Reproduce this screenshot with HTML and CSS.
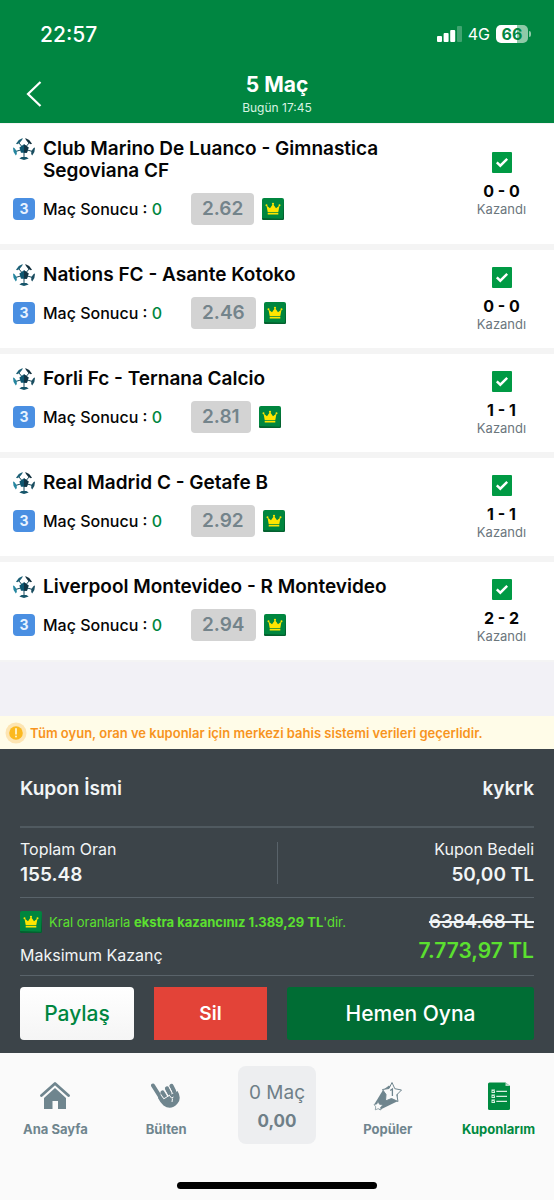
FILE: index.html
```html
<!DOCTYPE html>
<html lang="tr">
<head>
<meta charset="utf-8">
<meta name="viewport" content="width=device-width, initial-scale=1">
<title>Kuponlarım</title>
<link rel="stylesheet" href="styles.css">
</head>
<body>
<svg class="defs" aria-hidden="true">
  <symbol id="ball" viewBox="0 0 22 22">
    <path d="M11 11 5.500 4.500M11 11 16.500 4.500M11 11 2.500 13.500M11 11 19.500 13.500M11 11V20" stroke="#16495a" stroke-width="1" fill="none"/>
    <path d="M11 6.200 15.600 9.400 14 14.700H8L6.400 9.400z" fill="#0d5670"/>
    <path d="M11 6.200 15.600 9.400 14 14.700H11z" fill="#123444"/>
    <path d="M9.800 0 9.200 1.800 6.800 4.800 4.200 6.200 3 5.800 5.800 2z" fill="#1b5f76"/>
    <path d="M12.200 0 12.800 1.800 15.200 4.800 17.800 6.200 19 5.800 16.200 2z" fill="#122f3d"/>
    <path d="M0 9.500 1.400 10 3.600 13 3.800 16 2.800 17.500 .6 14z" fill="#2486a0"/>
    <path d="M22 9.500 20.600 10 18.400 13 18.200 16 19.200 17.500 21.400 14z" fill="#1a4d60"/>
    <path d="M6.300 20.500 8.600 19H13.400L15.700 20.500 11 22z" fill="#16556a"/>
  </symbol>
  <symbol id="crown" viewBox="0 0 22 22">
    <rect width="22" height="22" rx="2" fill="#00863f"/>
    <path d="M0 20V20.500A1.500 1.500 0 0 0 1.500 22H20.500A1.500 1.500 0 0 0 22 20.500V1.500L20.800 20.800z" fill="#04602f"/>
    <path d="M4.500 7.500 8 10.200 11 6 14 10.200 17.500 7.500 16.300 14H5.700zM5.700 14.700H16.300V16.400H5.700z" fill="#ffe500"/>
    <g fill="#ffe500"><circle cx="4.500" cy="7.300" r="1"/><circle cx="11" cy="5.800" r="1.100"/><circle cx="17.500" cy="7.300" r="1"/></g>
  </symbol>
  <symbol id="check" viewBox="0 0 20 21">
    <rect width="20" height="21" rx="1" fill="#009a44"/>
    <path d="M4.800 10.300 8.300 13.700 15.200 6.800" fill="none" stroke="#fff" stroke-width="2.400"/>
  </symbol>
</svg>

<header class="header">
  <div class="status">
    <span class="clock">22:57</span>
    <div class="status-right">
      <svg class="signal" viewBox="0 0 25 16" aria-hidden="true"><g fill="#fff"><rect y="10" width="5" height="6" rx="1"/><rect x="6.600" y="7" width="5" height="9" rx="1"/><rect x="13.200" y="4" width="5" height="12" rx="1"/><rect x="20" y="0" width="5" height="16" rx="1" opacity=".25"/></g></svg>
      <span class="network">4G</span>
      <span class="battery">66</span>
    </div>
  </div>
  <div class="titlebar">
    <button class="back" type="button" aria-label="Geri"><svg viewBox="0 0 16 26" aria-hidden="true"><path d="M14.500 1 2 13 14.500 25" fill="none" stroke="#fff" stroke-width="2.200"/></svg></button>
    <div class="heading">
      <h1>5 Maç</h1>
      <p>Bugün 17:45</p>
    </div>
  </div>
</header>

<main class="content">
  <section class="matches">
    <article class="match">
      <div class="match-main">
        <div class="teams"><svg class="icon"><use href="#ball"/></svg><h2>Club Marino De Luanco - Gimnastica Segoviana CF</h2></div>
        <div class="bet"><span class="count">3</span><span class="market">Maç Sonucu : <b>0</b></span><span class="odds">2.62</span><svg class="icon"><use href="#crown"/></svg></div>
      </div>
      <div class="result"><svg class="tick"><use href="#check"/></svg><strong>0 - 0</strong><span>Kazandı</span></div>
    </article>
    <article class="match">
      <div class="match-main">
        <div class="teams"><svg class="icon"><use href="#ball"/></svg><h2>Nations FC - Asante Kotoko</h2></div>
        <div class="bet"><span class="count">3</span><span class="market">Maç Sonucu : <b>0</b></span><span class="odds">2.46</span><svg class="icon"><use href="#crown"/></svg></div>
      </div>
      <div class="result"><svg class="tick"><use href="#check"/></svg><strong>0 - 0</strong><span>Kazandı</span></div>
    </article>
    <article class="match">
      <div class="match-main">
        <div class="teams"><svg class="icon"><use href="#ball"/></svg><h2>Forli Fc - Ternana Calcio</h2></div>
        <div class="bet"><span class="count">3</span><span class="market">Maç Sonucu : <b>0</b></span><span class="odds">2.81</span><svg class="icon"><use href="#crown"/></svg></div>
      </div>
      <div class="result"><svg class="tick"><use href="#check"/></svg><strong>1 - 1</strong><span>Kazandı</span></div>
    </article>
    <article class="match">
      <div class="match-main">
        <div class="teams"><svg class="icon"><use href="#ball"/></svg><h2>Real Madrid C - Getafe B</h2></div>
        <div class="bet"><span class="count">3</span><span class="market">Maç Sonucu : <b>0</b></span><span class="odds">2.92</span><svg class="icon"><use href="#crown"/></svg></div>
      </div>
      <div class="result"><svg class="tick"><use href="#check"/></svg><strong>1 - 1</strong><span>Kazandı</span></div>
    </article>
    <article class="match">
      <div class="match-main">
        <div class="teams"><svg class="icon"><use href="#ball"/></svg><h2>Liverpool Montevideo - R Montevideo</h2></div>
        <div class="bet"><span class="count">3</span><span class="market">Maç Sonucu : <b>0</b></span><span class="odds">2.94</span><svg class="icon"><use href="#crown"/></svg></div>
      </div>
      <div class="result"><svg class="tick"><use href="#check"/></svg><strong>2 - 2</strong><span>Kazandı</span></div>
    </article>
  </section>
</main>

<p class="notice">
  <svg viewBox="0 0 22 22" aria-hidden="true"><circle cx="11" cy="11" r="10.500" fill="#fde5b2"/><circle cx="11" cy="11" r="6.800" fill="#fbb91f"/><path d="M11 6.800V11.800" stroke="#fff4d0" stroke-width="1.800" stroke-linecap="round"/><circle cx="11" cy="14.600" r="1" fill="#fff4d0"/></svg>
  <span>Tüm oyun, oran ve kuponlar için merkezi bahis sistemi verileri geçerlidir.</span>
</p>

<section class="summary">
  <div class="coupon-name"><span>Kupon İsmi</span><span>kykrk</span></div>
  <div class="totals">
    <div class="total"><span>Toplam Oran</span><strong>155.48</strong></div>
    <div class="total total-right"><span>Kupon Bedeli</span><strong>50,00 TL</strong></div>
  </div>
  <div class="earnings">
    <div class="earn-left">
      <p class="bonus"><svg class="icon"><use href="#crown"/></svg><span>Kral oranlarla <b>ekstra kazancınız 1.389,29 TL</b>'dir.</span></p>
      <p class="max-label">Maksimum Kazanç</p>
    </div>
    <div class="earn-right"><s>6384.68 TL</s><strong>7.773,97 TL</strong></div>
  </div>
  <div class="actions">
    <button class="share" type="button">Paylaş</button>
    <button class="delete" type="button">Sil</button>
    <button class="play" type="button">Hemen Oyna</button>
  </div>
</section>

<footer class="footer">
  <nav class="tabs">
    <a class="tab" href="#ana-sayfa"><svg viewBox="0 0 30 30" aria-hidden="true"><path d="M1.500 14.500 15 2.500 28.500 14.500" fill="none" stroke="#6f858e" stroke-width="2.800" stroke-linecap="round" stroke-linejoin="round"/><path d="M15 7 26 17V28H18V20H12.500V28H4V17z" fill="#6f858e"/></svg><span>Ana Sayfa</span></a>
    <a class="tab" href="#bulten"><svg viewBox="0 0 30 30" aria-hidden="true"><path d="M2 4.500 10.500 18" stroke="#6f858e" stroke-width="4" stroke-linecap="round"/><path d="M9 12 13 17.500 26.500 10Q31 17 26.500 22.500 20 30 12.500 24.500 9.500 22 7 17z" fill="#6f858e"/><g stroke="#6f858e" stroke-width="4.200" stroke-linecap="round"><path d="M11.500 11.500 14 15.500M16 7.500 18.500 12.500M20.500 5 23 10"/></g><path d="M9.700 13.500 12.800 17.800 19 14M13.800 9.300 16.500 14M18.300 6 20.800 11M18.500 14.500 20.500 17 22.500 16M21.500 17.500 21 21" fill="none" stroke="#fafafa" stroke-width="1"/></svg><span>Bülten</span></a>
    <a class="slip" href="#kupon"><span>0 Maç</span><strong>0,00</strong></a>
    <a class="tab" href="#populer"><svg viewBox="0 0 30 30" aria-hidden="true"><path d="M16 4.500 10 9 1.500 23 6.500 29 24 20.500 25 12z" fill="#6f858e"/><path d="M19 1.500 21.800 7.700 28.500 9 23.800 13.800 25 20.500 18.500 17.500 12.500 20 13 13.500 9.500 8.500 16 7.500z" fill="#fafafa" stroke="#6f858e" stroke-width="1"/><path d="M5 20.500 6.500 23.300 9.800 24 7.600 26.200 8 29 5.200 27.700 2.300 28.800 2.700 25.800 1 23.500 3.800 23z" fill="#fafafa" stroke="#6f858e" stroke-width=".7"/><path d="M17.200 9.500 19.400 8V15" fill="none" stroke="#6f858e" stroke-width="1.300"/></svg><span>Popüler</span></a>
    <a class="tab tab-active" href="#kuponlarim"><svg viewBox="0 0 30 30" aria-hidden="true"><path d="M5.500 1.500H21.500L26 5V27.500Q26 29 24.500 29H5.500Q4 29 4 27.500V3Q4 1.500 5.500 1.500z" fill="#008a40"/><path d="M21.500 1.500V5H26z" fill="#bcd9c8"/><g fill="#d7efe0"><path d="M7.500 8.500H11V12H7.500zM7.500 13.500H11V17H7.500zM7.500 18.500H11V22H7.500z"/><path d="M12.300 9.800H23V11H12.300zM12.300 14.800H23V16H12.300zM12.300 19.800H23V21H12.300z"/></g><path d="M8.300 10 9.200 11 10.300 9.500M8.300 15 9.200 16 10.300 14.500M8.300 20 9.200 21 10.300 19.500" fill="none" stroke="#008a40" stroke-width=".7"/></svg><span>Kuponlarım</span></a>
  </nav>
  <div class="home-indicator"></div>
</footer>
</body>
</html>
```

FILE: styles.css
```css
* { box-sizing: border-box; }
body { margin: 0; min-height: 100vh; display: flex; flex-direction: column; background: #f2f1f6; color: #050505; font-family: Inter, "Liberation Sans", sans-serif; }
h1, h2, p { margin: 0; }
button { border: 0; padding: 0; font: inherit; cursor: pointer; }
a { color: inherit; text-decoration: none; }
.defs { position: absolute; width: 0; height: 0; }
.icon { flex: none; width: 22px; height: 22px; }

.header { background: #008641; color: #fff; padding-bottom: 4px; }
.status { display: flex; align-items: center; justify-content: space-between; height: 68px; padding: 0 26px 0 40px; }
.clock { font-size: 21px; font-weight: 500; }
.status-right { display: flex; align-items: center; gap: 6px; }
.signal { width: 25px; height: 16px; }
.network { font-size: 16px; }
.battery { position: relative; width: 32px; height: 18px; border-radius: 5px; background: linear-gradient(90deg, #fff 66%, #8fcaa8 66%); color: #008641; font-size: 16px; font-weight: 700; line-height: 18px; text-align: center; }
.battery::after { content: ""; position: absolute; right: -3px; top: 6px; width: 2px; height: 6px; border-radius: 0 2px 2px 0; background: #8fcaa8; }
.titlebar { display: grid; grid-template-columns: 1fr auto 1fr; align-items: start; padding: 5px 26px 0; }
.back { justify-self: start; width: 16px; height: 26px; margin-top: 8px; background: none; }
.back svg { display: block; width: 16px; height: 26px; }
.heading { grid-column: 2; text-align: center; }
.heading h1 { font-size: 21px; font-weight: 700; line-height: 24px; }
.heading p { font-size: 12px; line-height: 22px; color: #d8f3e2; }

.content { flex: 1; }
.matches { display: flex; flex-direction: column; gap: 6px; padding: 1px 0 2px; background: #f4f4f4; }
.match { display: flex; align-items: center; justify-content: space-between; padding: 0 20px 0 13px; background: #fff; }
.match-main { display: flex; flex-direction: column; gap: 11px; width: 380px; padding: 14px 0 19px; }
.teams, .bet { display: flex; gap: 8px; }
.teams h2 { font-size: 19px; font-weight: 600; line-height: 22px; }
.bet { align-items: center; }
.count { width: 22px; border-radius: 4px; background: #4a8fe2; color: #e8f3ff; font-size: 14px; font-weight: 700; line-height: 22px; text-align: center; }
.market { width: 140px; font-size: 16px; font-weight: 500; white-space: nowrap; }
.market b { font-weight: 500; color: #008641; }
.odds { padding: 0 11px; border-radius: 4px; background: #d3d3d3; color: #74848b; font-size: 19px; font-weight: 600; line-height: 32px; }
.result { display: flex; flex-direction: column; align-items: center; width: 65px; }
.tick { width: 20px; height: 21px; }
.result strong { padding-top: 8px; font-size: 16px; font-weight: 700; line-height: 20px; }
.result span { font-size: 13px; line-height: 16px; color: #6b767d; }

.notice { display: flex; align-items: center; gap: 3px; height: 33px; padding: 0 5px; background: #fffce8; color: #f7941e; font-size: 13px; font-weight: 600; }
.notice svg { flex: none; width: 22px; height: 22px; }

.summary { padding: 0 20px 13px; background: #3c4449; color: #f2f5f6; }
.coupon-name { display: flex; justify-content: space-between; padding: 29px 0 26px; border-bottom: 2px solid #505a60; font-size: 19px; font-weight: 600; line-height: 22px; }
.totals { display: grid; grid-template-columns: 1fr 1fr; padding: 14px 0 13px; border-bottom: 1px solid #59636a; }
.total { display: flex; flex-direction: column; gap: 10px; font-size: 16px; line-height: 14px; }
.total strong { font-size: 19px; font-weight: 600; line-height: 18px; }
.total-right { align-items: flex-end; border-left: 1px solid #59636a; }
.earnings { display: flex; justify-content: space-between; padding: 13px 0 10px; border-bottom: 1px solid #59636a; }
.earn-left { display: flex; flex-direction: column; gap: 12px; }
.bonus { display: flex; align-items: center; gap: 7px; color: #5be02f; font-size: 13px; line-height: 22px; }
.bonus b { font-weight: 700; }
.max-label { font-size: 16px; line-height: 20px; }
.earn-right { display: flex; flex-direction: column; align-items: flex-end; gap: 4px; }
.earn-right s { font-size: 19px; font-weight: 500; line-height: 22px; text-decoration-thickness: 2px; }
.earn-right strong { color: #5be02f; font-size: 21px; font-weight: 600; line-height: 28px; }
.actions { display: grid; grid-template-columns: 114fr 113fr 247fr; gap: 20px; padding-top: 11px; }
.actions button { height: 53px; font-size: 21px; font-weight: 500; }
.actions .share { border-radius: 4px; background: linear-gradient(#fff, #f5f5f5); color: #008641; }
.actions .delete { background: #e34338; color: #fff; font-size: 19px; font-weight: 600; }
.actions .play { border-radius: 3px; background: #006d34; color: #fff; }

.footer { padding: 13px 0 11px; background: #fafafa; }
.tabs { display: grid; grid-template-columns: repeat(5, 1fr); justify-items: center; align-items: start; }
.tab { display: flex; flex-direction: column; align-items: center; gap: 10px; padding-top: 15px; color: #6f858e; font-size: 13px; font-weight: 700; line-height: 16px; white-space: nowrap; }
.tab svg { width: 30px; height: 30px; }
.tab-active { color: #008a40; }
.slip { display: flex; flex-direction: column; align-items: center; justify-content: center; gap: 6px; width: 78px; height: 78px; padding-top: 4px; border-radius: 8px; background: #edeef0; color: #6f7f88; font-size: 19px; line-height: 22px; }
.slip strong { font-size: 17px; font-weight: 700; }
.home-indicator { width: 36%; height: 7px; margin: 38px auto 0; border-radius: 4px; background: #000; }
```
